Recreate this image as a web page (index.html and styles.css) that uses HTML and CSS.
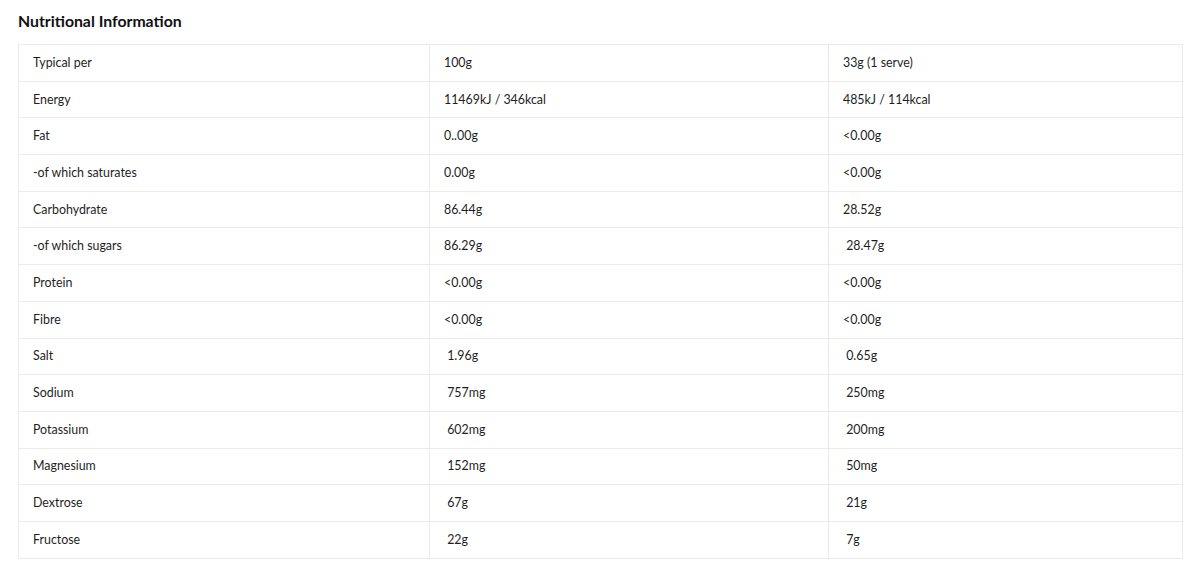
FILE: index.html
```html
<!DOCTYPE html>
<html>
<head>
<meta charset="utf-8">
<link rel="stylesheet" href="styles.css">
</head>
<body>
<div class="page">
  <h2 class="title">Nutritional Information</h2>
  <table class="nutrition">
    <colgroup><col class="c1"><col class="c2"><col class="c3"></colgroup>
    <tbody>
      <tr><td>Typical per</td><td>100g</td><td>33g (1 serve)</td></tr>
      <tr><td>Energy</td><td>11469kJ / 346kcal</td><td>485kJ / 114kcal</td></tr>
      <tr><td>Fat</td><td>0..00g</td><td>&lt;0.00g</td></tr>
      <tr><td>-of which saturates</td><td>0.00g</td><td>&lt;0.00g</td></tr>
      <tr><td>Carbohydrate</td><td>86.44g</td><td>28.52g</td></tr>
      <tr><td>-of which sugars</td><td>86.29g</td><td>&nbsp;28.47g</td></tr>
      <tr><td>Protein</td><td>&lt;0.00g</td><td>&lt;0.00g</td></tr>
      <tr><td>Fibre</td><td>&lt;0.00g</td><td>&lt;0.00g</td></tr>
      <tr><td>Salt</td><td>&nbsp;1.96g</td><td>&nbsp;0.65g</td></tr>
      <tr><td>Sodium</td><td>&nbsp;757mg</td><td>&nbsp;250mg</td></tr>
      <tr><td>Potassium</td><td>&nbsp;602mg</td><td>&nbsp;200mg</td></tr>
      <tr><td>Magnesium</td><td>&nbsp;152mg</td><td>&nbsp;50mg</td></tr>
      <tr><td>Dextrose</td><td>&nbsp;67g</td><td>&nbsp;21g</td></tr>
      <tr><td>Fructose</td><td>&nbsp;22g</td><td>&nbsp;7g</td></tr>
    </tbody>
  </table>
</div>
</body>
</html>
```

FILE: styles.css
```css
html, body {
  margin: 0;
  padding: 0;
  background: #ffffff;
}
body {
  font-family: "Lato", "Noto Sans", sans-serif;
  color: #1e1e1e;
}
.page {
  padding: 11px 18px 0 18px;
}
.title {
  margin: 0 0 14px 0;
  font-size: 15.8px;
  font-weight: 700;
  line-height: 19px;
  color: #111;
}
.nutrition {
  width: 1164px;
  border-collapse: collapse;
  table-layout: fixed;
  font-size: 12.4px;
}
.c1 { width: 411px; }
.c2 { width: 399px; }
.c3 { width: 354px; }
.nutrition td {
  border: 1px solid #ebebe8;
  height: 36.7px;
  padding: 0 14px;
  vertical-align: middle;
  line-height: 16px;
  box-sizing: border-box;
}
```
